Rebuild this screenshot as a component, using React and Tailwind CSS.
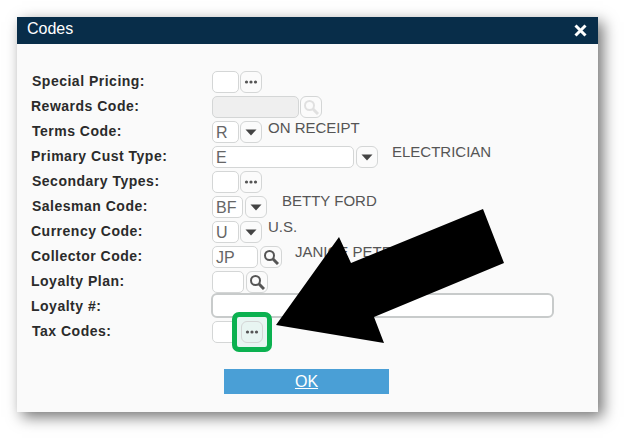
import React from "react";

const Dots = () => (
  <svg width="14" height="4" viewBox="0 0 14 4"><circle cx="2.5" cy="2" r="1.6" fill="#555" /><circle cx="7" cy="2" r="1.6" fill="#555" /><circle cx="11.5" cy="2" r="1.6" fill="#555" /></svg>
);
const Caret = () => (
  <svg width="12" height="7" viewBox="0 0 12 7"><path d="M0.5 0.5H11.5L6 6.5Z" fill="#444" /></svg>
);
const Search = ({ faded }) => (
  <svg width="16" height="16" viewBox="0 0 16 16" fill="none" stroke={faded ? "#e0e0e0" : "#555"} strokeWidth="2"><circle cx="6.5" cy="6.5" r="4.5" /><path d="M10 10L15 15" strokeWidth="3" /></svg>
);

const Btn = ({ children, className = "bg-[#fbfbfb]" }) => (
  <div className={"flex h-[22px] w-[22px] shrink-0 items-center justify-center rounded-[6px] border border-[#d4d6d6] " + className}>{children}</div>
);
const Input = ({ w, value, bg = "bg-white" }) => (
  <div className={"flex h-[22px] shrink-0 items-center rounded-[5px] border border-[#d4d6d6] pl-[3px] pt-[2px] text-[16px] text-[#666] " + w + " " + bg}>{value}</div>
);
const Label = ({ children, className = "pl-[14px]" }) => (
  <div className={"w-[195px] shrink-0 text-[14px] font-bold tracking-[0.5px] text-[#2b2b2b] " + className}>{children}</div>
);
const Row = ({ children }) => (
  <div className="flex h-[25px] items-start">{children}</div>
);
const Val = ({ children, className = "" }) => (
  <div className={"whitespace-nowrap text-[15px] leading-[16px] text-[#555] " + className}>{children}</div>
);

export default function App() {
  return (
    <div className="relative h-[439px] w-[624px] overflow-hidden bg-white font-['Liberation_Sans',Arial,sans-serif]">
      <div className="ml-[17px] pt-[17px]">
        <div className="h-[395px] w-[581px] bg-[#fafafa] shadow-[5px_5px_14px_rgba(0,0,0,0.55)]">
          <div className="flex h-[27px] items-start justify-between bg-[#082d49] pl-[10px] pr-[11px] text-white">
            <span className="text-[16px] leading-[24px]">Codes</span>
            <svg className="mt-[7px]" width="13" height="13" viewBox="0 0 13 13"><path d="M1.5 1.5L11.5 11.5M11.5 1.5L1.5 11.5" stroke="#fff" strokeWidth="3" /></svg>
          </div>
          <div className="pt-[27px]">
            <Row>
              <Label className="pl-[15px]">Special Pricing:</Label>
              <Input w="w-[27px]" /><div className="ml-px"><Btn><Dots /></Btn></div>
            </Row>
            <Row>
              <Label>Rewards Code:</Label>
              <Input w="w-[87px]" bg="bg-[#efefef]" /><div className="ml-px"><Btn><Search faded /></Btn></div>
            </Row>
            <Row>
              <Label className="pl-[15px]">Terms Code:</Label>
              <Input w="w-[27px]" value="R" /><div className="ml-px"><Btn><Caret /></Btn></div>
              <Val className="ml-[6px] -mt-px">ON RECEIPT</Val>
            </Row>
            <Row>
              <Label>Primary Cust Type:</Label>
              <Input w="w-[142px]" value="E" /><div className="ml-[2px]"><Btn><Caret /></Btn></div>
              <Val className="ml-[14px] -mt-[2px]">ELECTRICIAN</Val>
            </Row>
            <Row>
              <Label className="pl-[15px]">Secondary Types:</Label>
              <Input w="w-[27px]" /><div className="ml-px"><Btn><Dots /></Btn></div>
            </Row>
            <Row>
              <Label className="pl-[15px]">Salesman Code:</Label>
              <Input w="w-[31px]" value="BF" /><div className="ml-[2px]"><Btn><Caret /></Btn></div>
              <Val className="ml-[15px] -mt-[3px]">BETTY FORD</Val>
            </Row>
            <Row>
              <Label>Currency Code:</Label>
              <Input w="w-[27px]" value="U" /><div className="ml-px"><Btn><Caret /></Btn></div>
              <Val className="ml-[6px] -mt-[2px]">U.S.</Val>
            </Row>
            <Row>
              <Label>Collector Code:</Label>
              <Input w="w-[46px]" value="JP" /><div className="ml-[2px]"><Btn><Search /></Btn></div>
              <Val className="ml-[13px] -mt-[2px]">JANICE PETERS</Val>
            </Row>
            <Row>
              <Label>Loyalty Plan:</Label>
              <Input w="w-[32px]" /><div className="ml-[2px]"><Btn><Search /></Btn></div>
            </Row>
            <Row>
              <Label>Loyalty #:</Label>
              <div className="-ml-px -mt-[3px] h-[25px] w-[343px] rounded-[6px] border-2 border-[#c8cbcb] bg-white" />
            </Row>
            <Row>
              <Label className="pl-[15px]">Tax Codes:</Label>
              <Input w="w-[27px]" /><div className="ml-px"><Btn><Dots /></Btn></div>
            </Row>
            <div className="mt-[23px] flex">
              <div className="ml-[207px] flex h-[25px] w-[165px] items-center justify-center bg-[#4a9fd6] text-[16px] text-white underline">OK</div>
            </div>
          </div>
        </div>
      </div>
      <div className="absolute left-[232px] top-[312px] flex h-[40px] w-[40px] items-center justify-center rounded-[7px] border-[5px] border-[#0bb150] bg-[#e8f5f2]">
        <Btn className="bg-[#e8f5f2]"><Dots /></Btn>
      </div>
      <svg className="absolute left-0 top-0" width="624" height="439" viewBox="0 0 624 439">
        <polygon points="276,325 339,237 351,263 483,209 504,263 374,317 384,343" fill="#000" />
      </svg>
    </div>
  );
}
